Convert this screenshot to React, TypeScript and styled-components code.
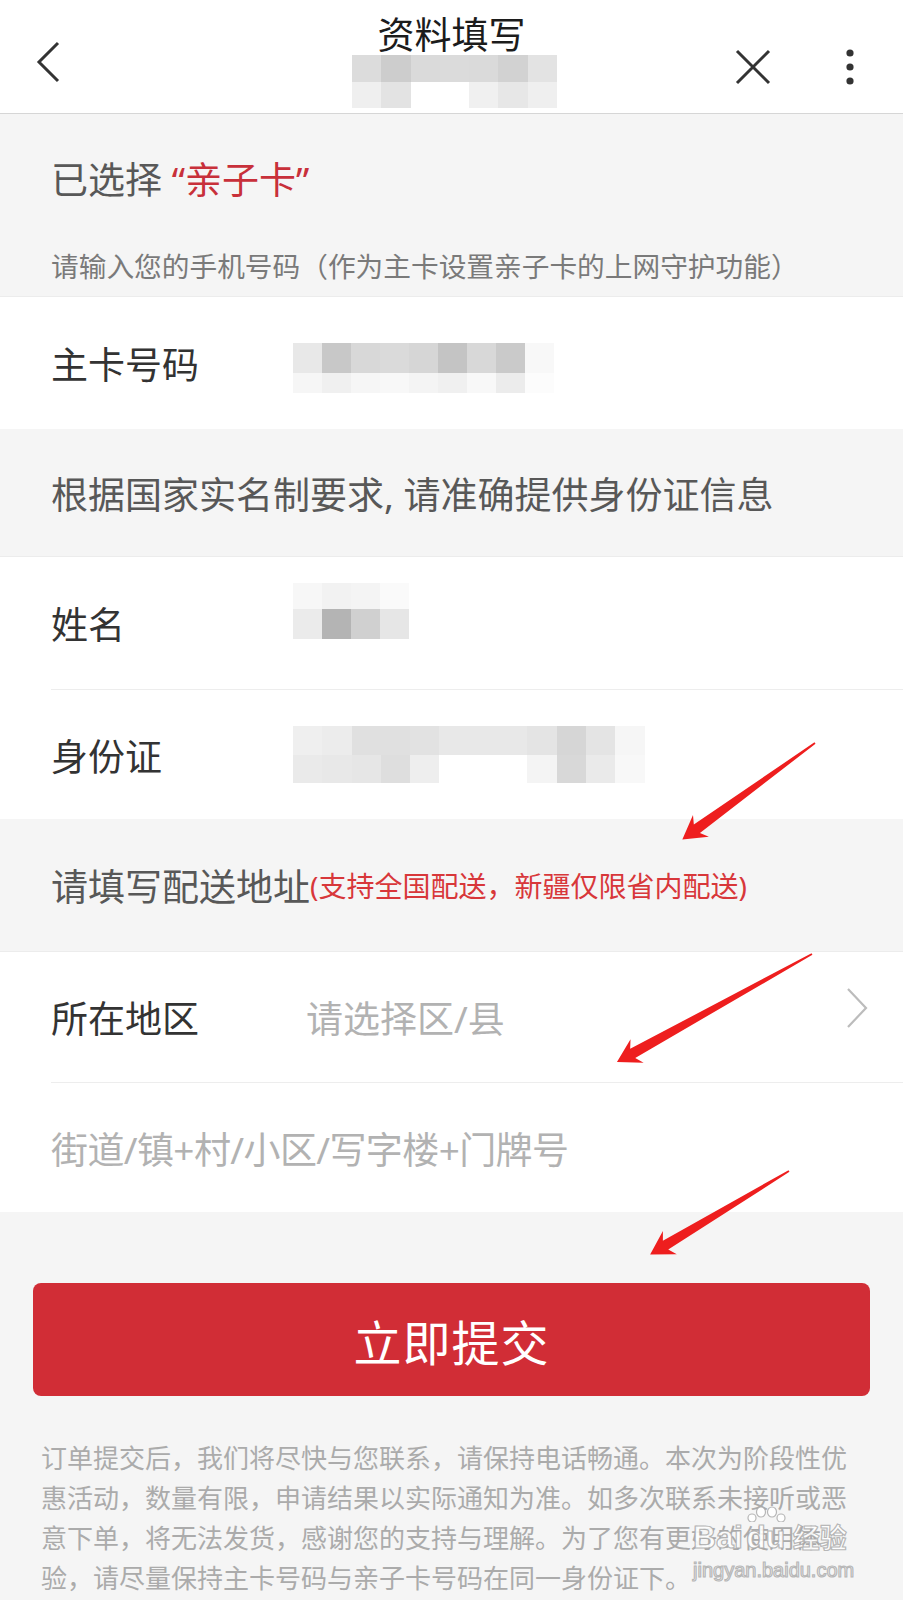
import React from "react";
import styled, { createGlobalStyle } from "styled-components";

const GlobalStyle = createGlobalStyle`
  html, body {
    margin: 0;
    padding: 0;
    background: #f5f5f5;
  }
  body {
    font-family: "Noto Sans", "Noto Sans CJK SC", sans-serif;
  }
  * {
    box-sizing: border-box;
  }
`;

const Page = styled.div`
  position: relative;
  width: 903px;
  min-height: 1600px;
  background: #f5f5f5;
  overflow: hidden;
`;

const Header = styled.header`
  display: flex;
  height: 114px;
  background: #fff;
  border-bottom: 1px solid #d6d6d6;
`;

const HeaderSide = styled.div<{ $side: "left" | "right" }>`
  flex: 1;
  display: flex;
  align-items: center;
  justify-content: ${(p) => (p.$side === "left" ? "flex-start" : "flex-end")};
  padding: ${(p) => (p.$side === "left" ? "10px 0 0 36px" : "20px 48px 0 0")};
  gap: 73px;
`;

const TitleBlock = styled.div`
  display: flex;
  flex-direction: column;
  align-items: center;
  padding-top: 15px;
  margin-left: 12px;
`;

const Title = styled.h1`
  margin: 0;
  font-size: 37px;
  line-height: 40px;
  font-weight: 400;
  color: #1c1c1c;
`;

const Mosaic = styled.div<{ $cols: number; $cellW: number; $rows: string; $dx?: number; $dy?: number }>`
  display: grid;
  grid-template-columns: repeat(${(p) => p.$cols}, ${(p) => p.$cellW}px);
  grid-template-rows: ${(p) => p.$rows};
  margin-left: ${(p) => p.$dx ?? 0}px;
  margin-top: ${(p) => Math.max(0, (p.$dy ?? 0) * 2)}px;
  margin-bottom: ${(p) => Math.max(0, -(p.$dy ?? 0) * 2)}px;
  filter: blur(0.6px);
`;

const MosaicCell = styled.div<{ $shade: string }>`
  background: ${(p) => p.$shade};
`;

const Intro = styled.section`
  display: flex;
  flex-direction: column;
  gap: 47px;
  padding: 44px 0 13px 51px;
`;

const Selected = styled.div`
  font-size: 37px;
  line-height: 44px;
  color: #585858;
`;

const Accent = styled.span`
  color: #c8303a;
`;

const Hint = styled.div`
  font-size: 27.7px;
  line-height: 34px;
  color: #7a7a7a;
  white-space: nowrap;
`;

const Group = styled.div`
  background: #fff;
  border-top: 1px solid #ececec;
`;

const Row = styled.div<{ $h: number }>`
  display: flex;
  height: ${(p) => p.$h}px;
  padding-left: 51px;
  background: #fff;
`;

const RowBody = styled.div<{ $divider?: boolean }>`
  flex: 1;
  display: flex;
  align-items: center;
  border-top: ${(p) => (p.$divider ? "1px solid #ededed" : "none")};
`;

const Label = styled.div`
  width: 242px;
  flex-shrink: 0;
  font-size: 37px;
  color: #333;
`;

const Placeholder = styled.div<{ $indent?: number; $tight?: boolean }>`
  flex: 1;
  font-size: 37px;
  color: #b2b2b2;
  padding-left: ${(p) => p.$indent ?? 0}px;
  letter-spacing: ${(p) => (p.$tight ? "-0.6px" : "0")};
`;

const ChevronWrap = styled.div`
  display: flex;
  margin: 0 34px 18px 0;
`;

const Notice = styled.div<{ $h: number }>`
  display: flex;
  align-items: center;
  height: ${(p) => p.$h}px;
  padding-left: 51px;
  font-size: 37px;
  color: #585858;
  white-space: nowrap;
`;

const RedNote = styled.span`
  font-size: 28px;
  color: #d8373a;
`;

const SubmitArea = styled.div`
  padding: 71px 33px 0;
`;

const SubmitButton = styled.button`
  display: block;
  width: 100%;
  height: 113px;
  border: none;
  border-radius: 8px;
  background: #d12d36;
  color: #fff;
  font-family: "Noto Sans CJK SC", sans-serif;
  font-size: 48px;
  letter-spacing: 1px;
  cursor: pointer;
`;

const Footnote = styled.p`
  margin: 0;
  padding: 42px 44px 0 41px;
  font-size: 26px;
  line-height: 40px;
  color: #ababab;
`;

const Annotations = styled.svg`
  position: absolute;
  top: 0;
  left: 0;
  pointer-events: none;
`;

const Watermark = styled.div`
  position: absolute;
  left: 693px;
  top: 1506px;
  display: flex;
  flex-direction: column;
  align-items: flex-start;
  color: rgba(255, 255, 255, 0.9);
  -webkit-text-stroke: 1.2px rgba(165, 165, 165, 0.8);
  pointer-events: none;
`;

const BrandLine = styled.div`
  display: flex;
  align-items: flex-end;
  gap: 3px;
`;

const BrandWord = styled.span`
  font-family: "Liberation Sans", sans-serif;
  font-weight: 700;
  font-size: 32px;
  line-height: 30px;
`;

const BrandCjk = styled.span`
  font-family: "Noto Sans CJK SC", sans-serif;
  font-weight: 700;
  font-size: 27px;
  line-height: 30px;
  margin-left: 4px;
`;

const Paw = styled.span`
  display: flex;
  flex-direction: column;
  align-items: center;
`;

const SiteLine = styled.span`
  font-family: "Liberation Sans", sans-serif;
  font-size: 20px;
  line-height: 26px;
  margin-top: 5px;
`;

const headerMosaic = [
  ["#dcdcdc", "#cdcdcd", "#dadada", "#dbdbdb", "#dadada", "#d2d2d2", "#e3e3e3"],
  ["#efefef", "#e3e3e3", "#ffffff", "#ffffff", "#f0f0f0", "#e7e7e7", "#efefef"],
];

const phoneMosaic = [
  ["#e8e8e8", "#c8c8c8", "#d8d8d8", "#dadada", "#d6d6d6", "#c4c4c4", "#d8d8d8", "#cacaca", "#f8f8f8"],
  ["#f6f6f6", "#f0f0f0", "#f6f6f6", "#f8f8f8", "#f4f4f4", "#f0f0f0", "#f8f8f8", "#ececec", "#fcfcfc"],
];

const nameMosaic = [
  ["#f7f7f7", "#f2f2f2", "#f4f4f4", "#fafafa"],
  ["#ebebeb", "#b4b4b4", "#d0d0d0", "#e6e6e6"],
];

const idMosaic = [
  ["#efefef", "#ececec", "#e0e0e0", "#e0e0e0", "#e2e2e2", "#e8e8e8", "#e8e8e8", "#e8e8e8", "#e4e4e4", "#d6d6d6", "#e4e4e4", "#f6f6f6"],
  ["#eaeaea", "#e8e8e8", "#e6e6e6", "#dedede", "#eeeeee", "#ffffff", "#ffffff", "#ffffff", "#f4f4f4", "#d8d8d8", "#eaeaea", "#f8f8f8"],
];

const Pixelated: React.FC<{ cells: string[][]; cellW: number; rows: string; dx?: number; dy?: number }> = ({
  cells,
  cellW,
  rows,
  dx,
  dy,
}) => (
  <Mosaic $cols={cells[0].length} $cellW={cellW} $rows={rows} $dx={dx} $dy={dy} aria-hidden="true">
    {cells.flatMap((row, r) => row.map((shade, c) => <MosaicCell key={`${r}-${c}`} $shade={shade} />))}
  </Mosaic>
);

const arrows = [
  { x: 815, y: 743, angle: 144, len: 164 },
  { x: 812, y: 954, angle: 151, len: 223 },
  { x: 789, y: 1171, angle: 149, len: 162 },
];

const arrowPath = (L: number) =>
  `M0,-0.9 L${L - 18},-5.2 L${L - 23},-13.5 L${L},0 L${L - 23},13.5 L${L - 18},5.2 L0,0.9 Z`;

export default function App() {
  return (
    <>
      <GlobalStyle />
      <Page>
        <Header>
          <HeaderSide $side="left">
            <svg width="24" height="44" viewBox="0 0 24 44">
              <path d="M22 3 L3 22 L22 41" fill="none" stroke="#333" strokeWidth="3" />
            </svg>
          </HeaderSide>
          <TitleBlock>
            <Title>资料填写</Title>
            <Pixelated cells={headerMosaic} cellW={29.3} rows="27px 26px" dx={6} />
          </TitleBlock>
          <HeaderSide $side="right">
            <svg width="38" height="38" viewBox="0 0 38 38">
              <path d="M3 3 L35 35 M35 3 L3 35" fill="none" stroke="#333" strokeWidth="3" />
            </svg>
            <svg width="10" height="36" viewBox="0 0 10 36">
              <circle cx="5" cy="4" r="3.6" fill="#333" />
              <circle cx="5" cy="18" r="3.6" fill="#333" />
              <circle cx="5" cy="32" r="3.6" fill="#333" />
            </svg>
          </HeaderSide>
        </Header>

        <Intro>
          <Selected>
            已选择 <Accent>“亲子卡”</Accent>
          </Selected>
          <Hint>请输入您的手机号码（作为主卡设置亲子卡的上网守护功能）</Hint>
        </Intro>

        <Group>
          <Row $h={132}>
            <RowBody>
              <Label>主卡号码</Label>
              <Pixelated cells={phoneMosaic} cellW={29} rows="30px 20px" dy={5} />
            </RowBody>
          </Row>
        </Group>

        <Notice $h={127}>根据国家实名制要求, 请准确提供身份证信息</Notice>

        <Group>
          <Row $h={132}>
            <RowBody>
              <Label>姓名</Label>
              <Pixelated cells={nameMosaic} cellW={29} rows="26px 30px" dy={-12} />
            </RowBody>
          </Row>
          <Row $h={130}>
            <RowBody $divider>
              <Label>身份证</Label>
              <Pixelated cells={idMosaic} cellW={29.3} rows="29px 28px" />
            </RowBody>
          </Row>
        </Group>

        <Notice $h={132}>
          请填写配送地址<RedNote>(支持全国配送，新疆仅限省内配送)</RedNote>
        </Notice>

        <Group>
          <Row $h={130}>
            <RowBody>
              <Label>所在地区</Label>
              <Placeholder $indent={13}>请选择区/县</Placeholder>
              <ChevronWrap>
                <svg width="24" height="42" viewBox="0 0 24 42">
                  <path d="M3 2 L21 21 L3 40" fill="none" stroke="#bcbcbc" strokeWidth="2.2" />
                </svg>
              </ChevronWrap>
            </RowBody>
          </Row>
          <Row $h={130}>
            <RowBody $divider>
              <Placeholder $tight>街道/镇+村/小区/写字楼+门牌号</Placeholder>
            </RowBody>
          </Row>
        </Group>

        <SubmitArea>
          <SubmitButton type="button">立即提交</SubmitButton>
        </SubmitArea>

        <Footnote>
          订单提交后，我们将尽快与您联系，请保持电话畅通。本次为阶段性优惠活动，数量有限，申请结果以实际通知为准。如多次联系未接听或恶意下单，将无法发货，感谢您的支持与理解。为了您有更好的使用体验，请尽量保持主卡号码与亲子卡号码在同一身份证下。
        </Footnote>

        <Annotations width="903" height="1600" viewBox="0 0 903 1600">
          {arrows.map((a) => (
            <path
              key={a.y}
              d={arrowPath(a.len)}
              fill="#ee1e1e"
              transform={`translate(${a.x} ${a.y}) rotate(${a.angle})`}
            />
          ))}
        </Annotations>

        <Watermark aria-hidden="true">
          <BrandLine>
            <BrandWord>Bai</BrandWord>
            <Paw>
              <svg width="40" height="16" viewBox="0 0 40 16">
                <g fill="rgba(255,255,255,0.9)" stroke="rgba(165,165,165,0.8)" strokeWidth="1.2">
                  <ellipse cx="6" cy="12" rx="4" ry="4" />
                  <ellipse cx="15" cy="6" rx="4.5" ry="5" />
                  <ellipse cx="26" cy="6" rx="4.5" ry="5" />
                  <ellipse cx="35" cy="12" rx="4" ry="4" />
                </g>
              </svg>
              <BrandWord>du</BrandWord>
            </Paw>
            <BrandCjk>经验</BrandCjk>
          </BrandLine>
          <SiteLine>jingyan.baidu.com</SiteLine>
        </Watermark>
      </Page>
    </>
  );
}
